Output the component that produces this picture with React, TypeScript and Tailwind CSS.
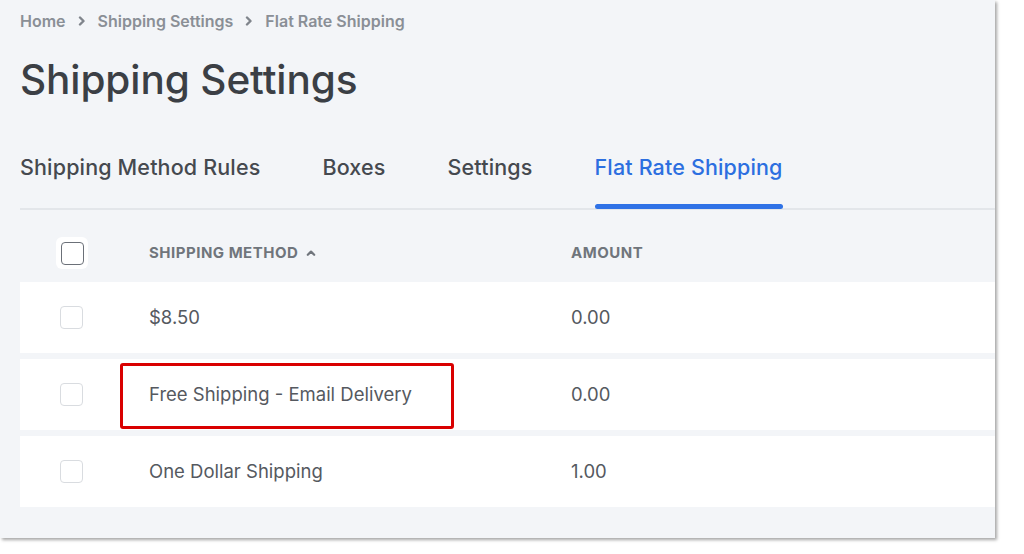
import React from "react";

const Chevron = () => (
  <svg width="8" height="10" viewBox="0 0 8 10" className="mx-[12px]">
    <path d="M2 1.5 L5.5 5 L2 8.5" fill="none" stroke="#80858c" strokeWidth="2.4" strokeLinecap="round" strokeLinejoin="round" />
  </svg>
);

const rows = [
  { name: "$8.50", amount: "0.00", highlight: false },
  { name: "Free Shipping - Email Delivery", amount: "0.00", highlight: true },
  { name: "One Dollar Shipping", amount: "1.00", highlight: false },
];

export default function App() {
  return (
    <div className="w-[1024px] h-[554px] bg-white overflow-hidden" style={{ fontFamily: "Inter, 'Noto Sans', sans-serif" }}>
      <div className="w-[995px] h-[538px] bg-[#f3f5f8] shadow-[2px_2px_3px_rgba(0,0,0,0.35)] pl-[20px] flex flex-col">
        {/* Breadcrumb */}
        <div className="flex items-center h-[22px] mt-[10px] text-[16px] font-semibold text-[#8a8f96]">
          <span>Home</span>
          <Chevron />
          <span>Shipping Settings</span>
          <Chevron />
          <span>Flat Rate Shipping</span>
        </div>
        {/* Title */}
        <h1 className="mt-[23px] h-[50px] leading-[50px] text-[40.5px] font-medium text-[#3b3f45] tracking-[-0.1px]">
          Shipping Settings
        </h1>
        {/* Tabs */}
        <div className="mt-[30px] flex gap-[62px] border-b-2 border-[#e3e6ea] h-[75px]">
          {["Shipping Method Rules", "Boxes", "Settings", "Flat Rate Shipping"].map((t, i) => (
            <div key={t} className="relative pt-[18px]">
              <span className={`text-[21.5px] font-medium leading-[28px] tracking-[0.15px] ${i === 3 ? "text-[#2c6fe0]" : "text-[#45494f]"}`}>{t}</span>
              {i === 3 && <div className="absolute left-0 right-0 bottom-[-1px] h-[5px] rounded-full bg-[#2f72e6]" />}
            </div>
          ))}
        </div>
        {/* Header */}
        <div className="flex items-center h-[72px] pt-[14px]">
          <div className="w-[129px] flex">
            <div className="ml-[36px] w-[32px] h-[32px] rounded-[6px] bg-white flex items-center justify-center">
              <div className="w-[23px] h-[23px] rounded-[4px] border-[1.5px] border-[#6b7078] bg-white" />
            </div>
          </div>
          <div className="w-[422px] flex items-center text-[15px] font-bold tracking-[0.5px] text-[#70757c] uppercase">
            Shipping Method
            <svg width="10" height="8" viewBox="0 0 10 8" className="ml-[8px]">
              <path d="M1.8 5.8 L5 2.6 L8.2 5.8" fill="none" stroke="#70757c" strokeWidth="2.2" strokeLinecap="round" strokeLinejoin="round" />
            </svg>
          </div>
          <div className="text-[15px] font-bold tracking-[0.5px] text-[#70757c] uppercase">Amount</div>
        </div>
        {/* Rows */}
        <div className="flex flex-col gap-[6px]">
          {rows.map((r) => (
            <div key={r.name} className="relative h-[71px] bg-white flex items-center text-[18.5px] text-[#55595f]">
              {r.highlight && (
                <div className="absolute left-[100px] top-[4px] w-[334px] h-[66px] border-[3px] border-[#d90000] rounded-[3px]" />
              )}
              <div className="w-[129px] flex">
                <div className="ml-[40px] w-[23px] h-[23px] rounded-[4px] border border-[#d9dce0] bg-white" />
              </div>
              <div className="w-[422px]">{r.name}</div>
              <div>{r.amount}</div>
            </div>
          ))}
        </div>
      </div>
    </div>
  );
}
